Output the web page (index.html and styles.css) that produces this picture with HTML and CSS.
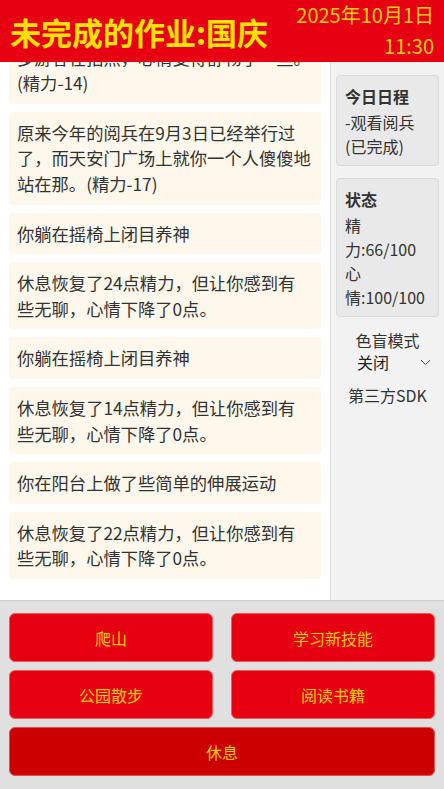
FILE: index.html
```html
<!DOCTYPE html>
<html>
  <head>
    <meta name="viewport" content="width=device-width, initial-scale=1">
    <meta charset="utf-8">
    <link rel="stylesheet" href="styles.css">
  </head>
  <body>
    <div class="app">
      <header class="topbar">
        <h1 class="title">未完成的作业:国庆</h1>
        <div class="clock">
          <div>2025年10月1日</div>
          <div>11:30</div>
        </div>
      </header>

      <main class="main">
        <div class="log">
          <div class="entry">你在天安门广场上转了一圈，看到了许多游客在拍照，心情变得舒畅了一些。(精力-14)</div>
          <div class="entry">原来今年的阅兵在9月3日已经举行过了，而天安门广场上就你一个人傻傻地站在那。(精力-17)</div>
          <div class="entry">你躺在摇椅上闭目养神</div>
          <div class="entry">休息恢复了24点精力，但让你感到有些无聊，心情下降了0点。</div>
          <div class="entry">你躺在摇椅上闭目养神</div>
          <div class="entry">休息恢复了14点精力，但让你感到有些无聊，心情下降了0点。</div>
          <div class="entry">你在阳台上做了些简单的伸展运动</div>
          <div class="entry">休息恢复了22点精力，但让你感到有些无聊，心情下降了0点。</div>
        </div>

        <aside class="side">
          <div class="card">
            <div class="card-title">今日日程</div>
            <div class="card-line">-观看阅兵(已完成)</div>
          </div>
          <div class="card">
            <div class="card-title">状态</div>
            <div class="card-line">精力:66/100</div>
            <div class="card-line">心情:100/100</div>
          </div>

          <div class="mode">
            <div>色盲模式</div>
            <label class="mode-select">
              <select>
                <option>关闭</option>
                <option>开启</option>
              </select>
              <svg width="11" height="7" viewBox="0 0 11 7"><path d="M1 1.2 L5.5 5.6 L10 1.2" fill="none" stroke="#444" stroke-width="1"/></svg>
            </label>
          </div>
          <div class="sdk">第三方SDK</div>
        </aside>
      </main>

      <footer class="actions">
        <button class="btn">爬山</button>
        <button class="btn">学习新技能</button>
        <button class="btn">公园散步</button>
        <button class="btn">阅读书籍</button>
        <button class="btn btn-rest">休息</button>
      </footer>
    </div>
  </body>
</html>
```

FILE: styles.css
```css
  * {
    box-sizing: border-box;
  }

  body
  {
    margin: 0;
    font-family: "Noto Sans CJK SC", "Noto Sans", sans-serif;
    color: #333;
    background: #fff;
  }

  .app
  {
    height: 789px;
    display: flex;
    flex-direction: column;
    overflow: hidden;
  }

  /* red bar on top */
  .topbar
  {
    height: 62px;
    flex-shrink: 0;
    background-color: #e60012;
    display: flex;
    justify-content: space-between;
    align-items: center;
    padding: 0 10px;
    position: relative;
    z-index: 2;
  }

  .title
  {
    margin: 0;
    font-size: 31px;
    font-weight: bold;
    color: #ffe100;
  }

  .clock
  {
    margin-top: -3px;
    font-size: 20px;
    line-height: 31px;
    text-align: right;
    color: #ffcc11;
  }

  .main
  {
    flex: 1;
    display: flex;
    min-height: 0;
  }

  /* the message list, newest at the bottom */
  .log
  {
    width: 330px;
    flex-shrink: 0;
    display: flex;
    flex-direction: column;
    justify-content: flex-end;
    overflow: hidden;
    padding: 0 9px 13px 9px;
  }

  .entry
  {
    flex-shrink: 0;
    background-color: #fdf7ec;
    border-radius: 4px;
    padding: 8px 9px 8px 8px;
    margin-bottom: 8px;
    font-size: 17.3px;
    line-height: 25.6px;
  }

  .side
  {
    flex: 1;
    background-color: #f2f2f2;
    border-left: 1px solid #dcdcdc;
    padding: 13px 5px 0 5px;
  }

  .card
  {
    background-color: #e9e9e9;
    border: 1px solid #dadada;
    border-radius: 4px;
    padding: 8px 8px 7px 8px;
    margin-bottom: 12px;
  }

  .card-title
  {
    font-size: 16px;
    font-weight: bold;
    line-height: 24px;
    margin-bottom: 2px;
  }

  .card-line
  {
    font-size: 16px;
    line-height: 24px;
  }

  .mode
  {
    margin-top: 12px;
    text-align: center;
    font-size: 16px;
    line-height: 22px;
  }

  .mode-select
  {
    display: flex;
    align-items: center;
    width: 74px;
    margin-left: 21px;
  }

  .mode-select select
  {
    flex: 1;
    appearance: none;
    -webkit-appearance: none;
    border: none;
    background: transparent;
    font-family: inherit;
    font-size: 16px;
    line-height: 22px;
    color: #222;
    padding: 0;
    margin: 0;
  }

  .sdk
  {
    margin-top: 11px;
    text-align: center;
    font-size: 16px;
    line-height: 22px;
  }

  /* buttons at the bottom */
  .actions
  {
    height: 189px;
    flex-shrink: 0;
    background-color: #e0e0e0;
    border-top: 1px solid #cccccc;
    display: grid;
    grid-template-columns: 1fr 1fr;
    grid-auto-rows: 49px;
    column-gap: 18px;
    row-gap: 8px;
    padding: 12px 9px;
  }

  .btn
  {
    background-color: #e60012;
    color: #ffcc00;
    border: 1px solid #f05a5a;
    border-radius: 6px;
    font-family: inherit;
    font-size: 16px;
    cursor: pointer;
  }

  .btn-rest
  {
    grid-column: 1 / 3;
    background-color: #cc0000;
    border-color: #e05050;
  }
```
